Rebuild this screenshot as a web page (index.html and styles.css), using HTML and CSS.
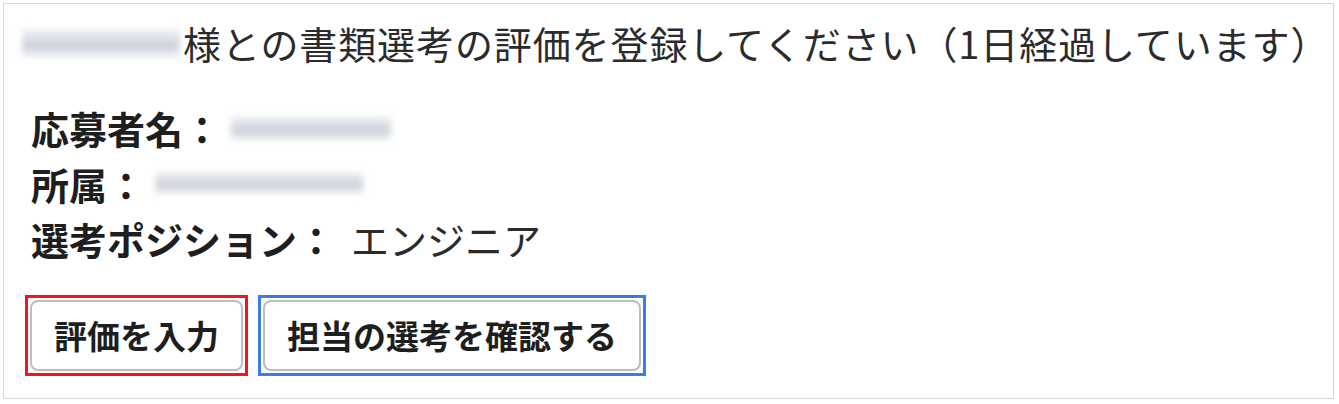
FILE: index.html
```html
<!DOCTYPE html>
<html lang="ja">
<head>
<meta charset="utf-8">
<link rel="stylesheet" href="styles.css">
</head>
<body>
<div class="card">
  <h1 class="title"><span class="redact redact-title"></span>様との書類選考の評価を登録してください（1日経過しています）</h1>
  <div class="info">
    <div class="row"><span class="label">応募者名：</span><span class="redact redact-name"></span></div>
    <div class="row"><span class="label">所属：</span><span class="redact redact-org"></span></div>
    <div class="row"><span class="label">選考ポジション：</span><span class="value">エンジニア</span></div>
  </div>
  <div class="actions">
    <div class="frame frame-red"><button class="btn">評価を入力</button></div>
    <div class="frame frame-blue"><button class="btn">担当の選考を確認する</button></div>
  </div>
</div>
</body>
</html>
```

FILE: styles.css
```css
html, body {
  margin: 0;
  padding: 0;
  background: #ffffff;
}
body {
  font-family: "Noto Sans CJK JP", "Noto Sans", sans-serif;
  color: #222222;
}
.card {
  box-sizing: border-box;
  margin: 3px 0 0 3px;
  width: 1331px;
  height: 396px;
  border: 1.5px solid #d6d6d6;
  padding: 16px 0 0 18px;
}
.title {
  margin: 0;
  font-size: 38px;
  font-weight: 400;
  letter-spacing: 0.9px;
  line-height: 46px;
  color: #2b2b2b;
  white-space: nowrap;
  display: flex;
  align-items: center;
}
.redact {
  display: inline-block;
  background: linear-gradient(to bottom, #f1f3f5 0%, #d5dbe1 45%, #c8cfd7 55%, #eef1f4 100%);
  filter: blur(3px);
  border-radius: 2px;
}
.redact-title {
  width: 158px;
  height: 28px;
  margin-right: 3px;
}
.info {
  margin-top: 34px;
  padding-left: 9px;
}
.row {
  display: flex;
  align-items: center;
  height: 55.5px;
  font-size: 38px;
  white-space: nowrap;
}
.label {
  font-weight: 700;
  color: #1e1e1e;
}
.value {
  font-weight: 400;
  margin-left: 16px;
  color: #2b2b2b;
}
.redact-name {
  width: 160px;
  height: 24px;
  margin-left: 10px;
}
.redact-org {
  width: 208px;
  height: 22px;
  margin-left: 10px;
}
.actions {
  display: flex;
  gap: 10px;
  margin-top: 28px;
  padding-left: 3px;
}
.frame {
  border: 3px solid;
  padding: 2px;
}
.frame-red {
  border-color: #f2141f;
}
.frame-blue {
  border-color: #3b7fdc;
}
.btn {
  display: block;
  box-sizing: border-box;
  height: 71px;
  padding: 0 22px;
  font-family: "Noto Sans CJK JP", "Noto Sans", sans-serif;
  font-size: 33px;
  font-weight: 700;
  color: #1e1e1e;
  background: #ffffff;
  border: 2px solid #bdbdbd;
  border-radius: 8px;
  line-height: 1;
}
```
